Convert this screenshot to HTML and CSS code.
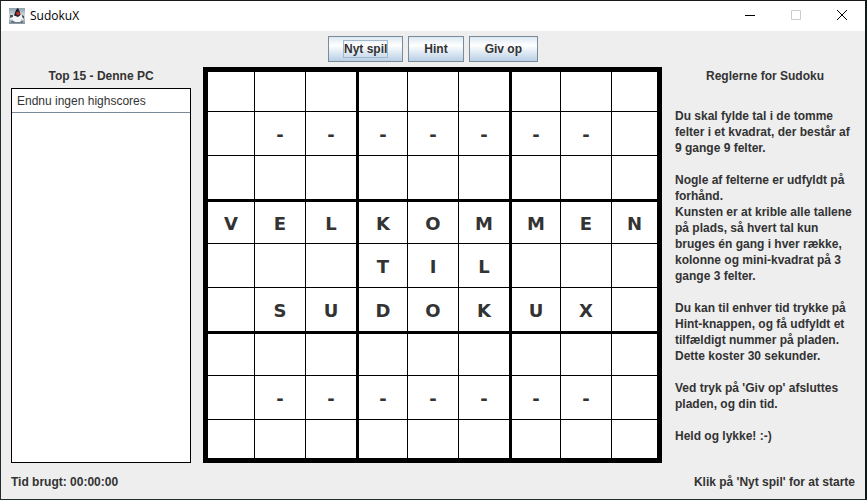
FILE: index.html
```html
<!DOCTYPE html>
<html lang="da">
<head>
<meta charset="utf-8">
<title>SudokuX</title>
<link rel="stylesheet" href="styles.css">
</head>
<body>
<div class="window">
  <header class="titlebar">
    <svg class="app-icon" viewBox="0 0 16 16" aria-hidden="true">
      <defs>
        <linearGradient id="sky" x1="0" y1="0" x2="0" y2="1">
          <stop offset="0" stop-color="#8fa0ae"/>
          <stop offset=".5" stop-color="#d5dce1"/>
          <stop offset="1" stop-color="#8798a6"/>
        </linearGradient>
      </defs>
      <rect width="16" height="16" fill="url(#sky)"/>
      <path d="M1 10 5 7h7l3 3-1 2-2-1v3H4v-3l-2 1z" fill="#f4f6f7"/>
      <path d="M1 7h3v2L1 10zM13 7l2 1v3l-2-2z" fill="#4a545d"/>
      <path d="M8.500 0c1.500 1 2.500 4 3 7L9 9 5 7.500C6 5 6.500 2 8.500 0z" fill="#202326"/>
      <circle cx="9" cy="5.500" r="1.700" fill="#cf3030"/>
      <path d="M2 13h3l1 1h5l1-1h2v2H2z" fill="#6b7883"/>
    </svg>
    <span class="app-title">SudokuX</span>
    <button class="win-btn" type="button" aria-label="Minimer"><svg viewBox="0 0 10 10"><path d="M0 5.500h10"/></svg></button>
    <button class="win-btn" type="button" aria-label="Maksimer" disabled><svg viewBox="0 0 10 10"><path d="M.5.5h9v9h-9z"/></svg></button>
    <button class="win-btn" type="button" aria-label="Luk"><svg viewBox="0 0 10 10"><path d="M0 0l10 10M10 0L0 10"/></svg></button>
  </header>

  <nav class="toolbar">
    <button class="btn" type="button"><span class="focus">Nyt spil</span></button>
    <button class="btn" type="button">Hint</button>
    <button class="btn" type="button">Giv op</button>
  </nav>

  <main class="content">
    <section class="side">
      <h2 class="heading">Top 15 - Denne PC</h2>
      <ul class="scores">
        <li>Endnu ingen highscores</li>
      </ul>
    </section>

    <div class="board">
      <div class="row"><span></span><span></span><span></span><span></span><span></span><span></span><span></span><span></span><span></span></div>
      <div class="row"><span></span><span>-</span><span>-</span><span>-</span><span>-</span><span>-</span><span>-</span><span>-</span><span></span></div>
      <div class="row"><span></span><span></span><span></span><span></span><span></span><span></span><span></span><span></span><span></span></div>
      <div class="row"><span>V</span><span>E</span><span>L</span><span>K</span><span>O</span><span>M</span><span>M</span><span>E</span><span>N</span></div>
      <div class="row"><span></span><span></span><span></span><span>T</span><span>I</span><span>L</span><span></span><span></span><span></span></div>
      <div class="row"><span></span><span>S</span><span>U</span><span>D</span><span>O</span><span>K</span><span>U</span><span>X</span><span></span></div>
      <div class="row"><span></span><span></span><span></span><span></span><span></span><span></span><span></span><span></span><span></span></div>
      <div class="row"><span></span><span>-</span><span>-</span><span>-</span><span>-</span><span>-</span><span>-</span><span>-</span><span></span></div>
      <div class="row"><span></span><span></span><span></span><span></span><span></span><span></span><span></span><span></span><span></span></div>
    </div>

    <section class="side">
      <h2 class="heading">Reglerne for Sudoku</h2>
      <div class="rules">
        <p>Du skal fylde tal i de tomme<br>felter i et kvadrat, der består af<br>9 gange 9 felter.</p>
        <p>Nogle af felterne er udfyldt på<br>forhånd.<br>Kunsten er at krible alle tallene<br>på plads, så hvert tal kun<br>bruges én gang i hver række,<br>kolonne og mini-kvadrat på 3<br>gange 3 felter.</p>
        <p>Du kan til enhver tid trykke på<br>Hint-knappen, og få udfyldt et<br>tilfældigt nummer på pladen.<br>Dette koster 30 sekunder.</p>
        <p>Ved tryk på 'Giv op' afsluttes<br>pladen, og din tid.</p>
        <p>Held og lykke! :-)</p>
      </div>
    </section>
  </main>

  <footer class="status">
    <span>Tid brugt: 00:00:00</span>
    <span>Klik på 'Nyt spil' for at starte</span>
  </footer>
</div>
</body>
</html>
```
FILE: styles.css
```css
* {
  box-sizing: border-box;
}

body {
  margin: 0;
  font: bold 12px/16px "Liberation Sans", Arial, sans-serif;
  color: #333;
}

.window {
  display: flex;
  flex-direction: column;
  min-height: 100vh;
  background: #eee;
  border: 1px solid #222c2e;
  border-top-color: #1a1a1c;
  border-right: 2px solid #0d1a1a;
}

.titlebar {
  display: flex;
  align-items: center;
  height: 30px;
  padding-left: 8px;
  background: #fff;
}

.app-icon {
  width: 16px;
  height: 16px;
  margin-right: 5px;
}

.app-title {
  flex: 1;
  font: 12px/16px "Open Sans", sans-serif;
  color: #000;
}

.win-btn {
  display: flex;
  align-items: center;
  justify-content: center;
  width: 46px;
  height: 30px;
  padding: 0 0 2px;
  border: 0;
  background: none;
}

.win-btn svg {
  width: 10px;
  height: 10px;
  fill: none;
  stroke: #000;
}

.win-btn:disabled svg {
  stroke: #ccc;
}

.toolbar {
  display: flex;
  justify-content: center;
  gap: 5px;
  padding: 5px;
}

.btn {
  height: 26px;
  padding: 0 15px;
  border: 1px solid #7a8a99;
  background: linear-gradient(#dde8f3, #fff 35%, #b8cfe5);
  font: inherit;
  color: inherit;
}

.focus {
  display: block;
  margin: 0 -1px;
  border: 1px solid #a3b8cc;
}

.content {
  flex: 1;
  display: grid;
  grid-template-columns: 180px minmax(0, 1fr) 180px;
  gap: 12px;
  padding: 0 10px;
}

.side {
  display: flex;
  flex-direction: column;
}

.heading {
  margin: 0;
  padding: 1px 0 4px;
  font: inherit;
  text-align: center;
}

.scores {
  flex: 1;
  margin: 0;
  padding: 0;
  border: 1px solid #000;
  background: #fff;
  font-weight: normal;
  list-style: none;
}

.scores li {
  padding: 4px 5px 3px;
  border-bottom: 1px solid #7a8a99;
}

.board {
  display: grid;
  grid-template-rows: repeat(9, minmax(0, 1fr));
  margin-right: 1px;
  background: #fff;
  font: bold 18px/20px "DejaVu Sans", Verdana, sans-serif;
}

.row {
  display: grid;
  grid-template-columns: repeat(9, minmax(0, 1fr));
}

.row span {
  display: flex;
  align-items: center;
  justify-content: center;
  padding-top: 2px;
  border: 0 solid #000;
  border-width: 1px 0 0 1px;
}

.row span:nth-child(3n + 1) {
  border-left-width: 3px;
}

.row:nth-child(3n + 1) span {
  border-top-width: 3px;
}

.row span:first-child {
  border-left-width: 5px;
}

.row span:last-child {
  border-right-width: 5px;
}

.row:first-child span {
  border-top-width: 5px;
}

.row:last-child span {
  border-bottom-width: 5px;
}

.rules {
  flex: 1;
  display: flex;
  flex-direction: column;
  justify-content: center;
  gap: 16px;
  white-space: nowrap;
}

.rules p {
  margin: 0;
}

.status {
  display: flex;
  justify-content: space-between;
  padding: 11px 10px 9px;
}
```
